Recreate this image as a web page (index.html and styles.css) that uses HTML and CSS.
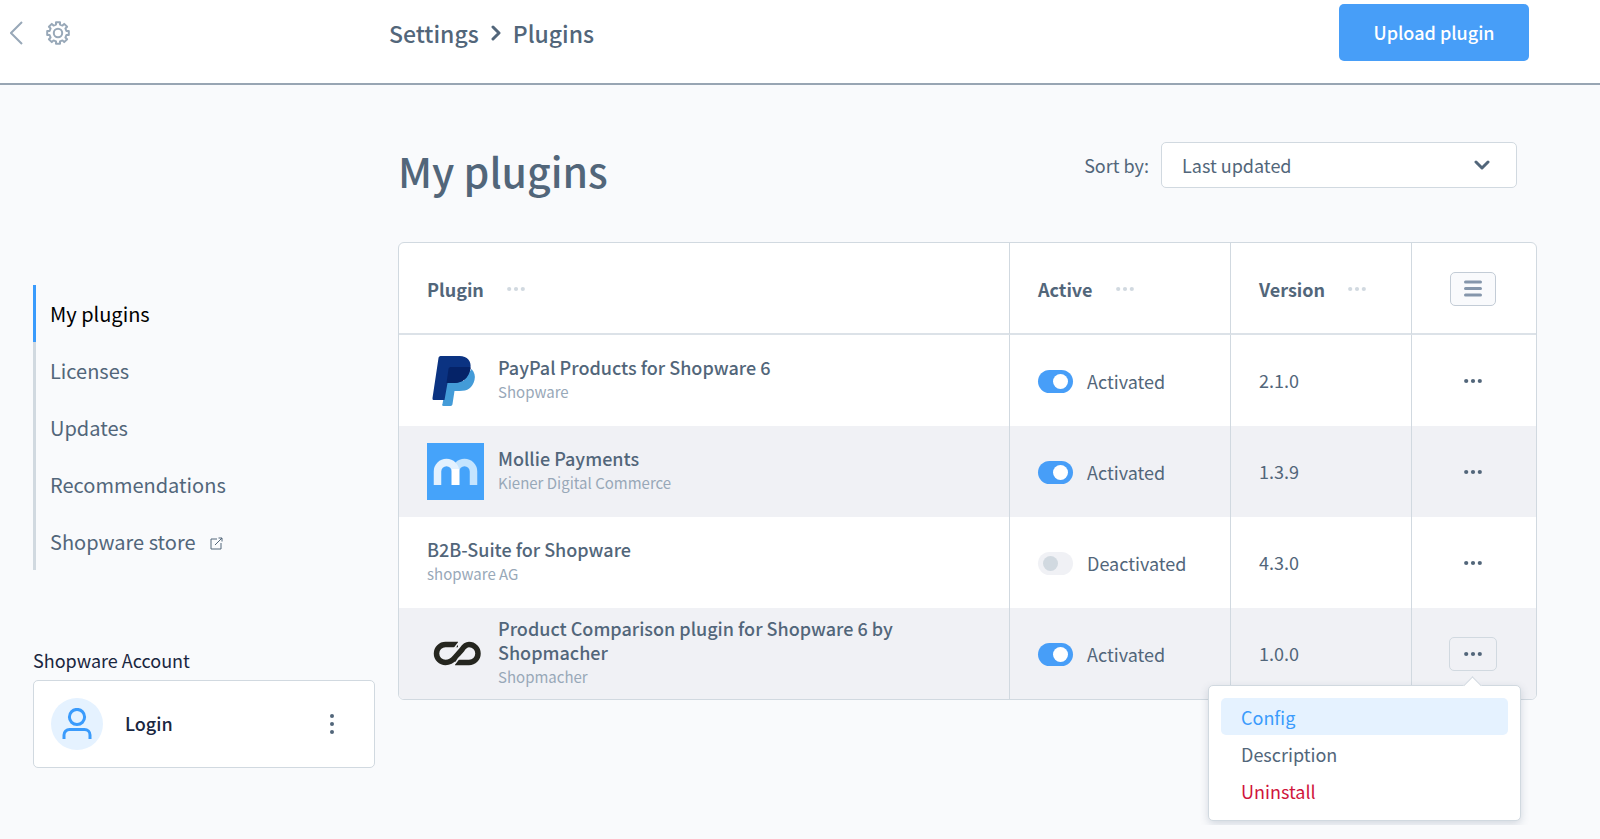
FILE: index.html
```html
<!DOCTYPE html>
<html lang="en">
<head>
<meta charset="utf-8">
<title>Plugins</title>
<link rel="stylesheet" href="styles.css">
</head>
<body>
<svg class="sprite" aria-hidden="true">
  <symbol id="dots" viewBox="0 0 18 6"><circle cx="2.2" cy="3" r="2.1"/><circle cx="9" cy="3" r="2.1"/><circle cx="15.8" cy="3" r="2.1"/></symbol>
</svg>
<header class="topbar">
  <nav class="topbar-nav" aria-label="Back">
    <a class="icon-link" href="#" aria-label="Back"><svg width="13" height="24" viewBox="0 0 13 24"><path d="M12 1 1 12l11 11"/></svg></a>
    <a class="icon-link" href="#" aria-label="Settings"><svg width="24" height="24" viewBox="0 0 24 24"><path d="M10 3.600V1.200h4v2.400l2.500 1 1.700-1.700 2.900 2.900-1.700 1.700 1 2.500h2.400v4h-2.400l-1 2.500 1.700 1.700-2.900 2.900-1.700-1.700-2.500 1v2.400h-4v-2.400l-2.500-1-1.700 1.700-2.900-2.900 1.700-1.700-1-2.500H1.200v-4h2.400l1-2.500-1.700-1.700 2.900-2.900 1.700 1.700z" stroke-linejoin="round"/><circle cx="12" cy="12" r="4.200"/></svg></a>
  </nav>
  <div class="breadcrumb">
    <a href="#">Settings</a>
    <svg width="10" height="16" viewBox="0 0 10 16"><path d="m2 2 6 6-6 6"/></svg>
    <span>Plugins</span>
  </div>
  <button class="btn-primary" type="button">Upload plugin</button>
</header>
<div class="page">
  <aside class="sidebar">
    <nav class="side-nav" aria-label="Plugins">
      <a class="active" href="#">My plugins</a>
      <a href="#">Licenses</a>
      <a href="#">Updates</a>
      <a href="#">Recommendations</a>
      <a href="#">Shopware store <svg width="13" height="17" viewBox="0 0 13 17"><path d="M7 6H1v10h10v-6M5 12l7-7M8.500 5H12v3.500"/></svg></a>
    </nav>
    <h2 class="account-title">Shopware Account</h2>
    <div class="account">
      <span class="avatar"><svg width="30" height="32" viewBox="0 0 30 32"><circle cx="15" cy="9" r="7.600"/><path d="M2 31v-4a5.500 5.500 0 0 1 5.500-5.500h15A5.500 5.500 0 0 1 28 27v4"/></svg></span>
      <a class="login" href="#">Login</a>
      <button class="account-more" type="button" aria-label="Account menu"><svg width="4" height="20" viewBox="0 0 4 20"><circle cx="2" cy="2" r="2"/><circle cx="2" cy="10" r="2"/><circle cx="2" cy="18" r="2"/></svg></button>
    </div>
  </aside>
  <main class="main">
    <div class="main-head">
      <h1>My plugins</h1>
      <div class="sort">
        <label for="sort">Sort by:</label>
        <div class="select">
          <select id="sort"><option>Last updated</option></select>
          <svg width="16" height="10" viewBox="0 0 16 10"><path d="m2 2 6 6 6-6"/></svg>
        </div>
      </div>
    </div>
    <table class="grid">
      <thead>
        <tr>
          <th class="col-plugin"><div class="th">Plugin <svg class="dots"><use href="#dots"/></svg></div></th>
          <th class="col-active"><div class="th">Active <svg class="dots"><use href="#dots"/></svg></div></th>
          <th class="col-version"><div class="th">Version <svg class="dots"><use href="#dots"/></svg></div></th>
          <th class="col-actions"><button class="columns" type="button" aria-label="Columns"><svg width="18" height="17" viewBox="0 0 18 17"><path d="M1.500 2h15M1.500 8.500h15M1.500 15h15"/></svg></button></th>
        </tr>
      </thead>
      <tbody>
        <tr>
          <td><div class="plugin">
            <svg class="logo" viewBox="0 0 57 57"><g transform="translate(-.5 2)"><path fill="#439bd8" d="M20 27h17l8-12c3 3 4 7 3 11-2 8-7 11-15 11h-5l-2 13c0 1-1 2-2 2h-7c-1 0-2-1-1-2z"/><path fill="#0b3382" d="M14 2h19c8 0 12 5 11 12-2 10-8 15-17 15h-6l-3 17H7c-1 0-1-1-1-2l6-40c0-1 1-2 2-2z"/><path fill="#052368" d="M22 15c0-1 1-2 2-2h19c1 0 1 1 1 2-2 9-8 14-16 14h-8z"/></g></svg>
            <div><div class="name">PayPal Products for Shopware 6</div><div class="vendor">Shopware</div></div>
          </div></td>
          <td><label class="toggle"><input type="checkbox" checked> Activated</label></td>
          <td class="version">2.1.0</td>
          <td class="actions"><div class="menu-anchor"><button class="more" type="button" aria-label="Actions"><svg class="dots"><use href="#dots"/></svg></button></div></td>
        </tr>
        <tr>
          <td><div class="plugin">
            <svg class="logo" viewBox="0 0 57 57"><path fill="#45a3fa" d="M0 0h57v57H0z"/><g fill="none" stroke-width="7.500"><path stroke="#c4e4fe" d="M28.500 42V28.500a9 9 0 0 1 18 0V42"/><path stroke="#e3f1fe" d="M10.500 42V28.500a9 9 0 0 1 18 0V42"/><path stroke="#fff" d="M28.500 42V26"/></g></svg>
            <div><div class="name">Mollie Payments</div><div class="vendor">Kiener Digital Commerce</div></div>
          </div></td>
          <td><label class="toggle"><input type="checkbox" checked> Activated</label></td>
          <td class="version">1.3.9</td>
          <td class="actions"><div class="menu-anchor"><button class="more" type="button" aria-label="Actions"><svg class="dots"><use href="#dots"/></svg></button></div></td>
        </tr>
        <tr>
          <td><div class="plugin">
            <div><div class="name">B2B-Suite for Shopware</div><div class="vendor">shopware AG</div></div>
          </div></td>
          <td><label class="toggle"><input type="checkbox"> Deactivated</label></td>
          <td class="version">4.3.0</td>
          <td class="actions"><div class="menu-anchor"><button class="more" type="button" aria-label="Actions"><svg class="dots"><use href="#dots"/></svg></button></div></td>
        </tr>
        <tr>
          <td><div class="plugin">
            <svg class="logo" viewBox="0 0 57 57"><path fill="none" stroke="#25261f" stroke-width="5.500" d="M31 19.500H18.500a9 9 0 0 0 0 18c5 0 7-2 9.500-5l7-8c2-3 4-5 7-5a9 9 0 0 1 0 18H28"/><path stroke="#f0f1f5" stroke-width="1.500" d="m33 16-7 9M26 41l7-9"/></svg>
            <div><div class="name">Product Comparison plugin for Shopware 6 by Shopmacher</div><div class="vendor">Shopmacher</div></div>
          </div></td>
          <td><label class="toggle"><input type="checkbox" checked> Activated</label></td>
          <td class="version">1.0.0</td>
          <td class="actions"><div class="menu-anchor">
            <button class="more open" type="button" aria-label="Actions" aria-expanded="true"><svg class="dots"><use href="#dots"/></svg></button>
            <div class="menu">
              <button class="selected" type="button">Config</button>
              <button type="button">Description</button>
              <button class="danger" type="button">Uninstall</button>
            </div>
          </div></td>
        </tr>
      </tbody>
    </table>
  </main>
</div>
</body>
</html>
```
FILE: styles.css
```css
* { box-sizing: border-box; }
body {
  margin: 0;
  background: #f9fafc;
  color: #52667a;
  font: 18px/24px "Noto Sans CJK JP", "Noto Sans", sans-serif;
}
button, select { font: inherit; color: inherit; cursor: pointer; }
a { color: inherit; text-decoration: none; }
h1, h2 { margin: 0; }
svg { display: block; flex: none; fill: none; stroke: currentColor; }
.sprite { position: absolute; width: 0; height: 0; }

.topbar {
  display: flex;
  align-items: flex-start;
  background: #fff;
  border-bottom: 2px solid #98a5b3;
  padding: 4px 71px 22px 10px;
}
.topbar-nav { display: flex; gap: 23px; width: 379px; padding-top: 17px; color: #98a8b8; }
.icon-link svg { stroke-width: 2; }
.breadcrumb {
  flex: 1;
  display: flex;
  align-items: center;
  gap: 12px;
  font-size: 23px;
  line-height: 32px;
  font-weight: 500;
  padding-top: 13px;
}
.breadcrumb svg { stroke-width: 3; stroke-linecap: round; stroke-linejoin: round; }
.btn-primary {
  height: 57px;
  width: 190px;
  padding: 0 0 2px;
  border: 0;
  border-radius: 5px;
  background: #479ef8;
  color: #fff;
  font-weight: 500;
}

.page { display: flex; gap: 23px; padding: 57px 63px 57px 33px; }
.sidebar { width: 342px; flex: none; padding-top: 143px; }
.side-nav { display: flex; flex-direction: column; font-size: 20px; }
.side-nav a {
  display: flex;
  align-items: center;
  gap: 14px;
  height: 57px;
  padding-left: 14px;
  border-left: 3px solid #d1d9e0;
}
.side-nav .active { border-color: #3a9bfc; color: #000; }
.account-title { margin: 78px 0 8px; font-size: 18px; font-weight: 400; color: #1a2640; }
.account {
  display: flex;
  align-items: center;
  background: #fff;
  border: 1px solid #d1d9e0;
  border-radius: 5px;
  padding: 17px 40px 17px 17px;
}
.avatar {
  width: 52px;
  height: 52px;
  display: flex;
  align-items: center;
  justify-content: center;
  border-radius: 50%;
  background: #e5f2ff;
  color: #3a9bfc;
}
.avatar svg { stroke-width: 3; }
.login { flex: 1; padding: 0 0 2px 22px; color: #1a2640; font-weight: 500; }
.account-more { border: 0; background: none; padding: 0; }
.account-more svg { fill: #52667a; stroke: none; }

.main { flex: 1; min-width: 0; }
.main-head { display: flex; justify-content: space-between; align-items: flex-start; padding-right: 20px; margin-bottom: 44px; }
h1 { font-size: 41px; line-height: 56px; font-weight: 500; }
.sort { display: flex; align-items: center; gap: 12px; }
.select { position: relative; }
.select select {
  width: 356px;
  height: 46px;
  appearance: none;
  padding: 0 20px;
  border: 1px solid #d1d9e0;
  border-radius: 5px;
  background: #fff;
}
.select svg { position: absolute; right: 27px; top: 18px; stroke-width: 3; stroke-linecap: round; stroke-linejoin: round; pointer-events: none; }

.grid {
  width: 100%;
  table-layout: fixed;
  border-collapse: separate;
  border-spacing: 0;
  border: 1px solid #d1d9e0;
  border-radius: 6px;
  background: #fff;
}
.col-active { width: 221px; }
.col-version { width: 181px; }
.col-actions { width: 125px; }
th, td { height: 91px; padding: 0 28px; text-align: left; vertical-align: middle; }
th + th, td + td { border-left: 1px solid #d1d9e0; }
th { height: 92px; padding-top: 2px; border-bottom: 2px solid #dce2e8; font-weight: 700; }
.th { display: flex; align-items: center; gap: 23px; }
.dots { width: 18px; height: 6px; fill: currentColor; stroke: none; }
.th .dots { height: 8px; color: #d1d9e0; }
th.col-actions, .actions { padding: 1px 2px 0 0; }
.version { padding-bottom: 2px; }
.columns, .more {
  display: flex;
  align-items: center;
  justify-content: center;
  height: 34px;
  margin: 0 auto;
  padding: 0;
  border: 1px solid transparent;
  border-radius: 5px;
  background: none;
}
.columns { width: 46px; border-color: #c3ccd6; background: #f9fafc; color: #8596ab; }
.columns svg { stroke-width: 3; stroke-linecap: round; }
.more { width: 48px; }
.more.open { border-color: #d1d9e0; }
tbody tr:nth-child(even) td { background: #f0f1f5; }
tbody tr:last-child td:first-child { border-bottom-left-radius: 5px; }
tbody tr:last-child td:last-child { border-bottom-right-radius: 5px; }

.plugin { display: flex; align-items: center; gap: 14px; padding-right: 60px; }
.logo { width: 57px; height: 57px; stroke: none; }
.name { font-weight: 500; }
.vendor { padding-bottom: 1px; font-size: 15px; line-height: 26px; color: #98a8b8; }

.toggle { display: flex; align-items: center; gap: 14px; }
.toggle input {
  appearance: none;
  display: flex;
  align-items: center;
  width: 35px;
  height: 23px;
  margin: 1px 0 0;
  padding: 0 5px;
  border-radius: 12px;
  background: #f0f1f5;
}
.toggle input::before { content: ""; width: 15px; height: 15px; border-radius: 50%; background: #d1d9e0; }
.toggle input:checked { background: #479ef8; justify-content: flex-end; }
.toggle input:checked::before { background: #fff; }

.menu-anchor { position: relative; width: 48px; margin: 0 auto; }
.menu {
  position: absolute;
  top: 48px;
  right: -24px;
  z-index: 1;
  width: 313px;
  padding: 12px 12px 11px;
  border: 1px solid #d1d9e0;
  border-radius: 5px;
  background: #fff;
  box-shadow: 0 3px 8px rgba(60, 80, 110, 0.2);
}
.menu::before {
  content: "";
  position: absolute;
  top: -7px;
  right: 41px;
  width: 12px;
  height: 12px;
  border: 1px solid #d1d9e0;
  border-width: 1px 0 0 1px;
  background: #fff;
  transform: rotate(45deg);
}
.menu button {
  display: block;
  width: 100%;
  height: 37px;
  padding: 0 20px;
  border: 0;
  border-radius: 5px;
  background: none;
  text-align: left;
}
.menu .selected { background: #e5f2ff; color: #3a9bfc; }
.menu .danger { color: #d0143c; }
```
